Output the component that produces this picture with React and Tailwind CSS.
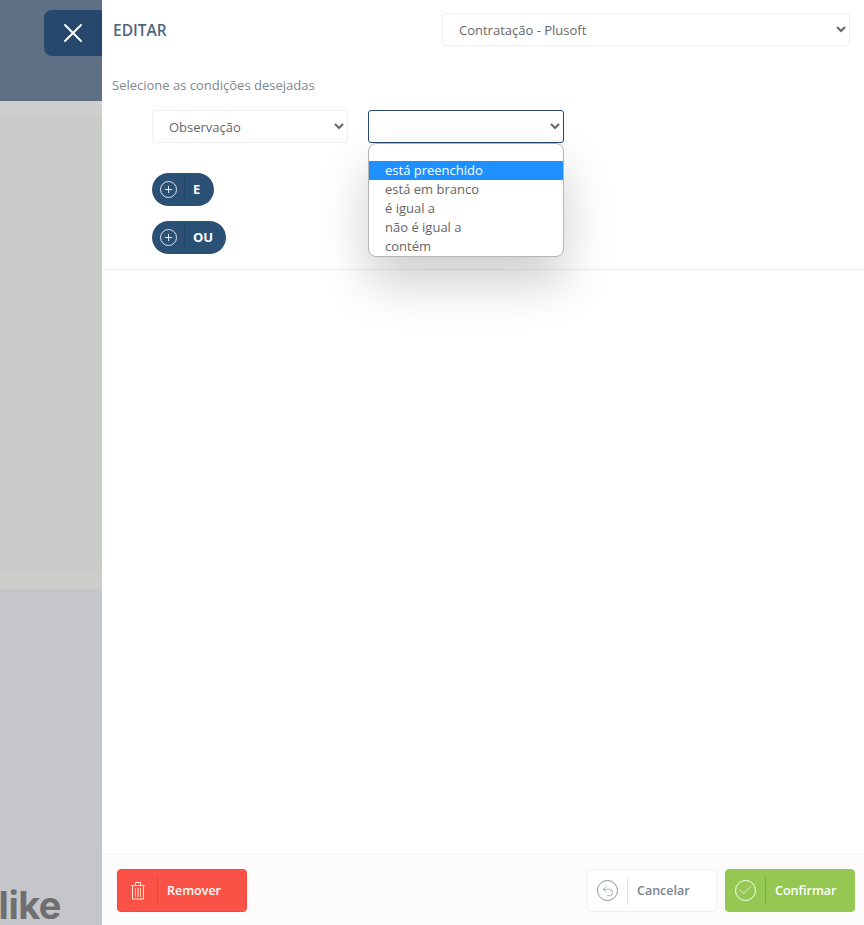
import { X, Plus, Check, Undo2 } from "lucide-react";

function PillButton({ label, widthClass }) {
    return (
        <button className={`flex items-center h-[33px] rounded-full bg-[#2a5075] text-white ${widthClass}`}>
            <span className="flex items-center justify-center w-[33px] h-[23px] border-r border-[#234565]">
                <span className="flex items-center justify-center w-[17px] h-[17px] ml-[1px] rounded-full border border-[#dfe6ec]">
                    <Plus className="w-[11px] h-[11px] text-[#eef2f5]" strokeWidth={2} />
                </span>
            </span>
            <span className="pl-[8px] text-[13px] font-bold leading-none">{label}</span>
        </button>
    );
}

function FooterButton({ label, icon, className, dividerClass, textClass }) {
    return (
        <button className={`flex items-center w-[130px] h-[43px] rounded-[4px] border ${className}`}>
            <span className={`flex items-center justify-center w-[40px] h-[28px] border-r ${dividerClass}`}>
                {icon}
            </span>
            <span className={`pl-[9px] pt-[1px] text-[12.5px] font-semibold ${textClass}`}>{label}</span>
        </button>
    );
}

function TrashIcon() {
    return (
        <svg width="16" height="19" viewBox="0 0 16 19" fill="none" stroke="#ffe3e1" strokeWidth="1">
            <path d="M1 4.5h14" />
            <path d="M5.5 4V1.5h5V4" />
            <path d="M2.5 4.5v13.5h11V4.5" />
            <path d="M5.5 7v9" stroke="#ffc98a" />
            <path d="M8 7v9" />
            <path d="M10.5 7v9" stroke="#ffc98a" />
        </svg>
    );
}

export default function App() {
    return (
        <div className="relative flex h-[925px] w-[864px] overflow-hidden bg-white font-['Open_Sans',sans-serif]">
            {/* Background page behind the panel */}
            <div className="relative flex flex-col w-[102px] shrink-0 overflow-hidden">
                <div className="h-[101px] bg-[#5f7084]" />
                <div className="h-[15px] bg-[#cfcfce]" />
                <div className="h-[458px] bg-[#c9cbc9]" />
                <div className="h-[15px] bg-[#cdcdcc]" />
                <div className="flex-1 bg-[#c5c6ca]" />
                <span className="absolute right-[41px] top-[877px] text-[38px] leading-[56px] font-bold font-['Inter',sans-serif] tracking-[-0.5px] text-[#6f6f6f]">
                    like
                </span>
            </div>

            {/* Close tab */}
            <button className="absolute left-[44px] top-[10px] flex items-center justify-center w-[58px] h-[46px] rounded-l-[8px] bg-[#26486c]">
                <X className="w-[32px] h-[32px] text-white" strokeWidth={1.4} />
            </button>

            {/* Panel */}
            <div className="flex flex-col flex-1 min-w-0 text-[#6c757d]">
                <div className="flex items-center justify-between h-[60px] pl-[11px] pr-[14px]">
                    <h2 className="pt-[2px] text-[15.5px] font-semibold text-[#4f6480]">EDITAR</h2>
                    <select className="w-[408px] h-[33px] mb-[1px] pl-[12px] pr-[8px] text-[13px] text-[#666] border border-[#eeeeee] rounded-[3px]">
                        <option>Contratação - Plusoft</option>
                    </select>
                </div>

                <div className="h-[210px] border-b border-[#ececec] pl-[10px]">
                    <p className="mt-[15px] text-[13px] leading-[20px] text-[#7d8791]">Selecione as condições desejadas</p>

                    <div className="relative flex gap-[20px] mt-[15px] ml-[40px]">
                        <select className="w-[196px] h-[33px] pl-[12px] pr-[8px] text-[13px] text-[#666] border border-[#eeeeee] rounded-[3px]">
                            <option>Observação</option>
                        </select>
                        <select className="w-[196px] h-[33px] pl-[12px] pr-[8px] text-[13px] text-[#666] border border-[#26486c] rounded-[3px]">
                            <option></option>
                        </select>

                        {/* Open dropdown list */}
                        <div className="absolute left-[216px] top-[33px] z-10 w-[196px] h-[114px] pt-[17px] overflow-hidden rounded-[8px] border border-[#b5b5b5] bg-white text-[13px] leading-[19px] text-[#666] shadow-[0_25px_50px_rgba(0,0,0,0.2)]">
                            <div className="pl-[16px] bg-[#1e90ff] text-white">está preenchido</div>
                            <div className="pl-[16px]">está em branco</div>
                            <div className="pl-[16px]">é igual a</div>
                            <div className="pl-[16px]">não é igual a</div>
                            <div className="pl-[16px]">contém</div>
                        </div>
                    </div>

                    <div className="flex flex-col items-start gap-[15px] mt-[30px] ml-[40px]">
                        <PillButton label="E" widthClass="w-[62px]" />
                        <PillButton label="OU" widthClass="w-[74px]" />
                    </div>
                </div>

                <div className="flex-1" />

                {/* Footer actions */}
                <div className="flex items-center justify-between h-[72px] pl-[15px] pr-[9px] pt-[2px] border-t border-[#f5f5f5] bg-[#fcfcfc]">
                    <FooterButton
                        label="Remover"
                        className="bg-[#fa5247] border-[#f4473d]"
                        dividerClass="border-[#e0483e]"
                        textClass="text-white"
                        icon={<TrashIcon />}
                    />
                    <div className="flex gap-[8px]">
                        <FooterButton
                            label="Cancelar"
                            className="bg-white border-[#eceeef]"
                            dividerClass="border-[#dfe2e4]"
                            textClass="text-[#77838f]"
                            icon={
                                <span className="flex items-center justify-center w-[21px] h-[21px] rounded-full border border-[#87929c]">
                                    <Undo2 className="w-[14px] h-[14px] text-[#87929c]" strokeWidth={1.25} />
                                </span>
                            }
                        />
                        <FooterButton
                            label="Confirmar"
                            className="bg-[#94c852] border-[#94c852]"
                            dividerClass="border-[#7fae45]"
                            textClass="text-white"
                            icon={
                                <span className="flex items-center justify-center w-[21px] h-[21px] rounded-full border border-white">
                                    <Check className="w-[15px] h-[15px] text-white" strokeWidth={1.25} />
                                </span>
                            }
                        />
                    </div>
                </div>
            </div>
        </div>
    );
}
